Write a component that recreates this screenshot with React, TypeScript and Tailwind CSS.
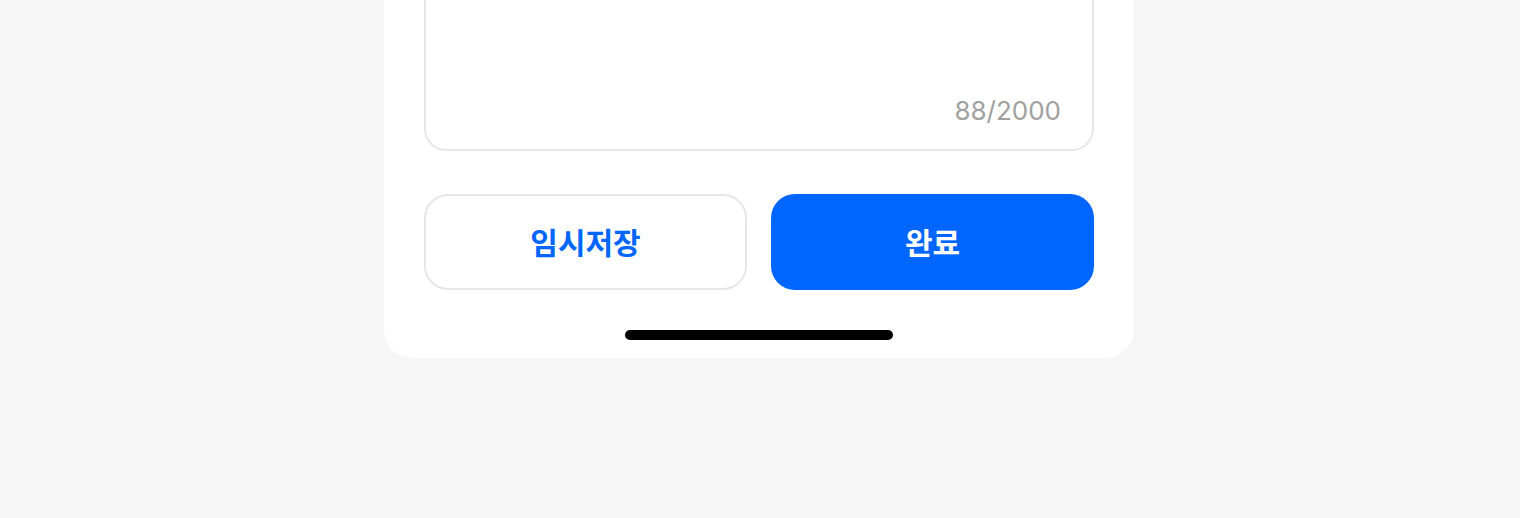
export default function App() {
  return (
    <main className="w-[1520px] h-[518px] overflow-hidden bg-[#f6f6f6] flex justify-center pr-[2px]">
      <div className="w-[750px] -mt-[120px] self-start bg-white rounded-b-[28px] px-[40px] pt-[40px] flex flex-col">
        {/* Text area */}
        <div className="h-[231px] border-2 border-[#e6e6e6] rounded-[22px] flex flex-col justify-end items-end pr-[31px] pb-[22px]">
          <span className="text-[26px] leading-[32px] text-[#a0a0a0] font-['Inter',sans-serif]">
            88/2000
          </span>
        </div>

        {/* Buttons */}
        <div className="mt-[43px] grid grid-cols-[323px_323px] gap-[24px]">
          <button className="h-[96px] rounded-[24px] border-2 border-[#e6e6e6] bg-white text-[#0066ff] text-[30px] font-bold leading-[40px] pb-[2px] font-['Noto_Sans_CJK_KR',sans-serif]">
            임시저장
          </button>
          <button className="h-[96px] rounded-[24px] bg-[#0066ff] text-white text-[30px] font-bold leading-[40px] pb-[2px] font-['Noto_Sans_CJK_KR',sans-serif]">
            완료
          </button>
        </div>

        {/* Home indicator */}
        <div className="flex justify-center pt-[40px] pb-[18px]">
          <div className="w-[268px] h-[10px] rounded-full bg-black" />
        </div>
      </div>
    </main>
  );
}
